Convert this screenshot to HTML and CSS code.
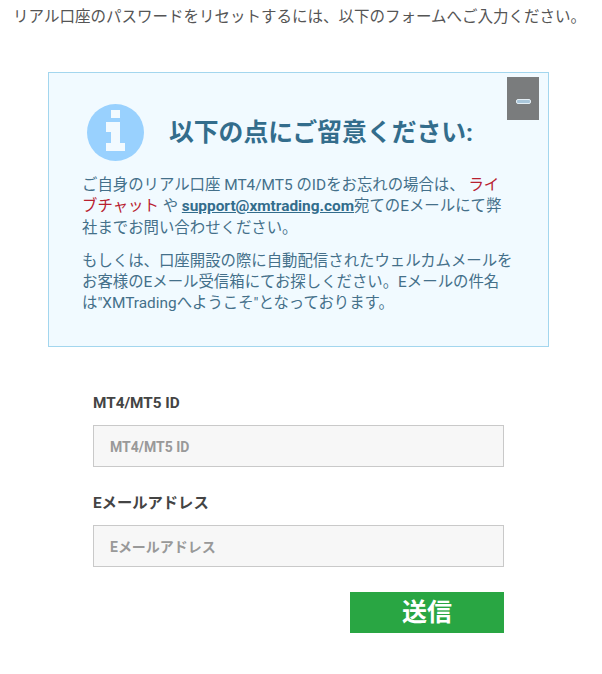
FILE: index.html
```html
<!DOCTYPE html>
<html lang="ja">
<head>
    <meta charset="UTF-8">
    <meta name="viewport" content="width=device-width, initial-scale=1.0">
    <title>パスワードのリセット</title>
    <link rel="stylesheet" href="styles.css">
</head>
<body>
    <p class="intro">リアル口座のパスワードをリセットするには、以下のフォームへご入力ください。</p>
    <div class="notice">
        <button class="notice-close" type="button" aria-label="閉じる"><span></span></button>
        <div class="notice-head">
            <svg class="notice-icon" width="57" height="57" viewBox="0 0 57 57" aria-hidden="true">
                <circle cx="28.5" cy="28.5" r="28.5" fill="#99d1fe"/>
                <path d="M24 6h9v8h-9zM19 18h14v21h5v8H19v-8h5V28h-5z" fill="#f2faff"/>
            </svg>
            <h3>以下の点にご留意ください:</h3>
        </div>
        <div class="notice-text">
            <p>ご自身のリアル口座 MT4/MT5 のIDをお忘れの場合は、 <a class="chat">ライブチャット</a> や <a class="mail">support@xmtrading.com</a>宛てのEメールにて弊社までお問い合わせください。</p>
            <p>もしくは、口座開設の際に自動配信されたウェルカムメールをお客様のEメール受信箱にてお探しください。Eメールの件名は"XMTradingへようこそ"となっております。</p>
        </div>
    </div>
    <form class="reset-form" action="/" method="post">
        <label for="login">MT4/MT5 ID</label>
        <input type="text" id="login" name="login" placeholder="MT4/MT5 ID">
        <label for="email">Eメールアドレス</label>
        <input type="email" id="email" name="email" placeholder="Eメールアドレス">
        <button type="submit">送信</button>
    </form>
</body>
</html>
```

FILE: styles.css
```css
*,*::before,*::after{
    padding: 0;
    margin: 0;
    box-sizing: border-box;
}
body{
    font-family: Roboto, "Noto Sans CJK JP", sans-serif;
    font-size: 15.4px;
    color: #555;
    background: #fff;
    overflow: hidden;
}
.intro{
    padding: 7px 3px 0 0;
    font-size: 15.5px;
    line-height: 21px;
    text-align: center;
}

.notice{
    position: relative;
    width: 501px;
    height: 275px;
    margin: 44px 0 0 48px;
    padding: 31px 33px 0;
    background: #f1faff;
    border: 1px solid #a3d6ee;
    color: #44708a;
}
.notice-close{
    position: absolute;
    top: 4px;
    right: 9px;
    width: 32px;
    height: 43px;
    border: none;
    background: #7a7c7d;
    display: flex;
    align-items: center;
    justify-content: center;
}
.notice-close span{
    width: 15px;
    height: 5px;
    margin-top: 5px;
    background: #a9c6da;
    border: 1px solid #e4eef4;
    border-radius: 2px;
}
.notice-head{
    display: flex;
    align-items: center;
    gap: 25px;
    padding-left: 5px;
    margin-bottom: 14px;
}
.notice-head h3{
    padding-bottom: 5px;
    font-size: 24.8px;
    font-weight: 700;
    color: #336d8c;
}
.notice-text{
    width: 432px;
}
.notice-text p{
    line-height: 21.3px;
    margin-bottom: 12px;
}
.notice-text .chat{
    color: #b8202f;
}
.notice-text .mail{
    color: #336d8c;
    font-weight: 700;
    text-decoration: underline;
}

.reset-form{
    width: 411px;
    margin: 45px 0 0 93px;
    display: flex;
    flex-direction: column;
}
.reset-form label{
    padding-top: 1px;
    font-size: 15.3px;
    font-weight: 700;
    line-height: 20px;
    color: #444;
    margin-bottom: 12px;
}
.reset-form input{
    height: 42px;
    margin-bottom: 25px;
    padding: 2px 16px 0;
    background: #f7f7f7;
    border: 1px solid #c9c9c9;
    font-family: inherit;
    font-size: 14px;
    font-weight: 700;
    outline: none;
}
.reset-form input::placeholder{
    color: #999;
    opacity: 1;
}
.reset-form button{
    align-self: flex-end;
    width: 154px;
    height: 41px;
    padding-bottom: 5px;
    background: #29a643;
    border: none;
    color: #fff;
    font-family: inherit;
    font-size: 25px;
    font-weight: 700;
}
```
